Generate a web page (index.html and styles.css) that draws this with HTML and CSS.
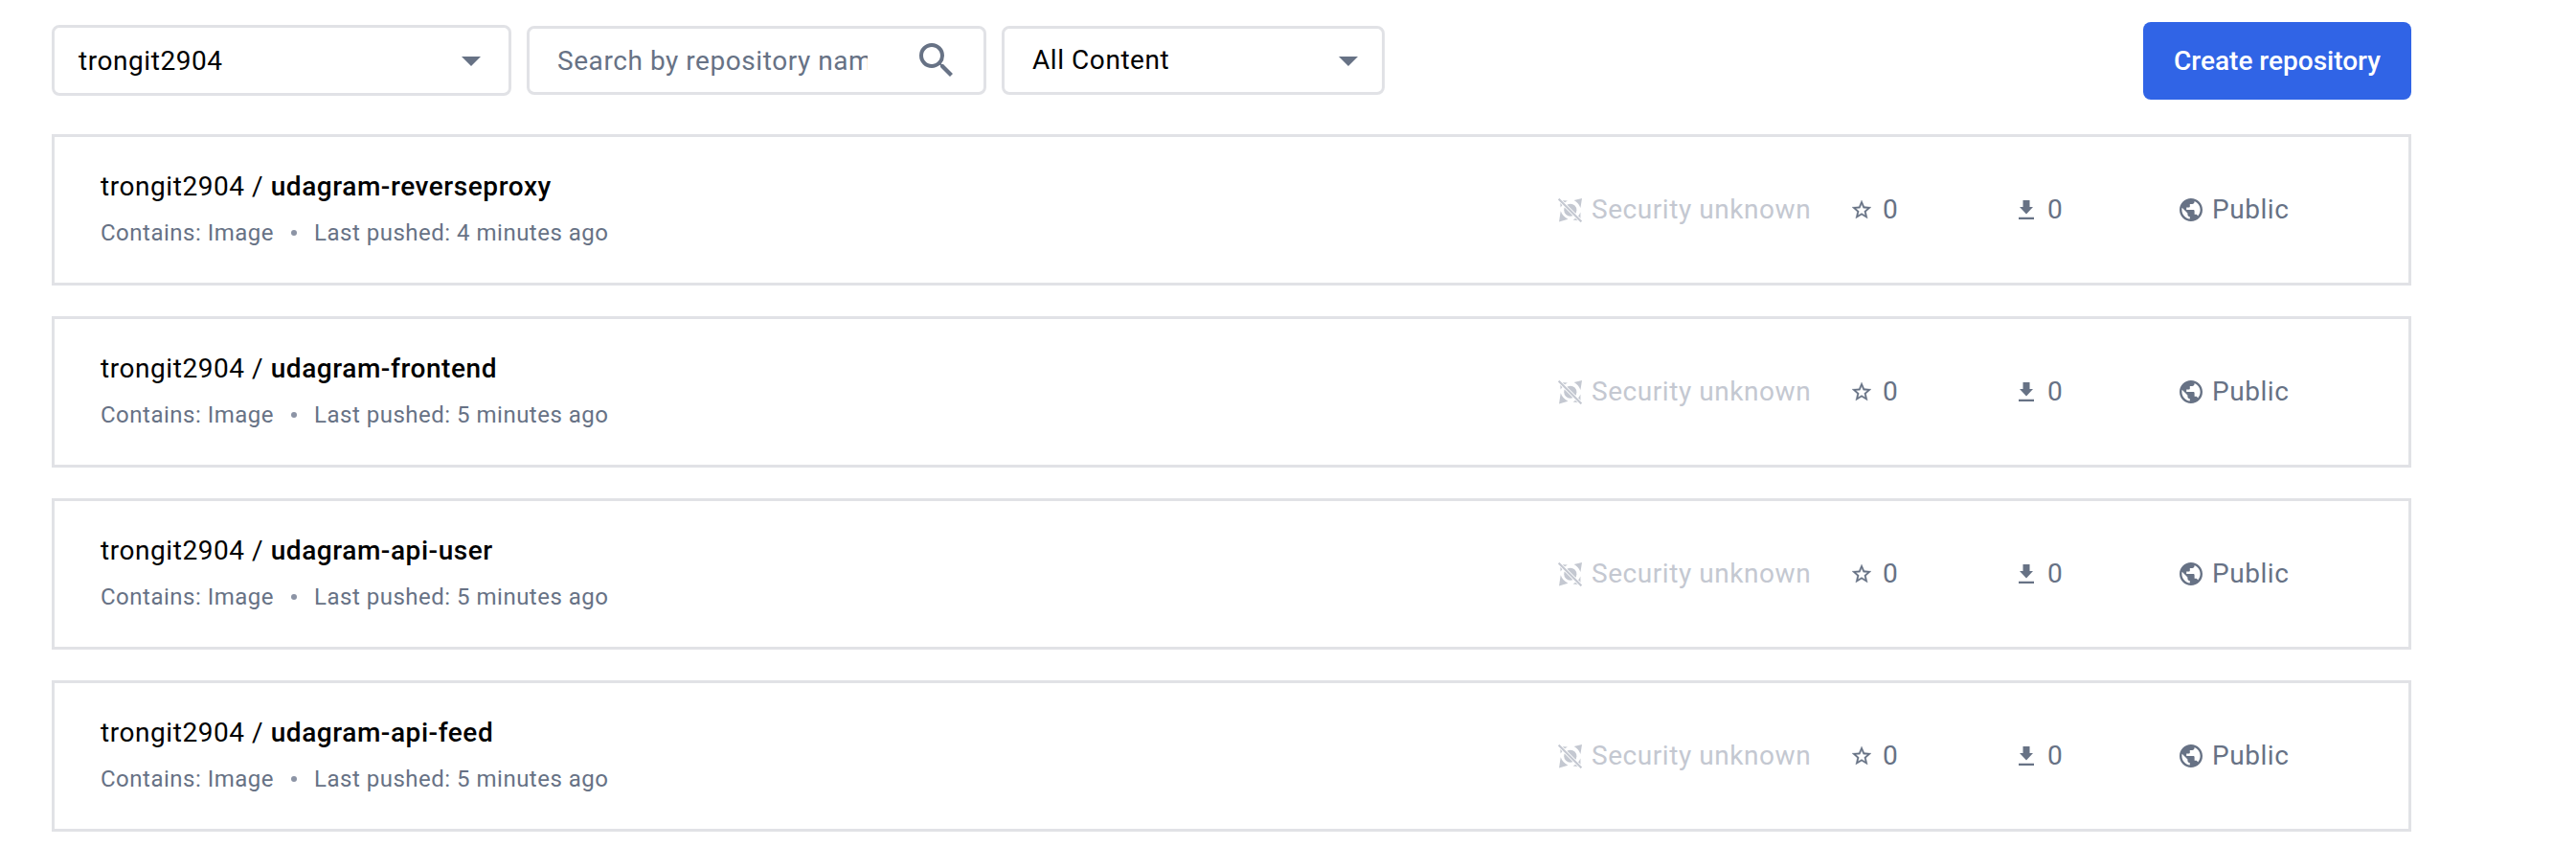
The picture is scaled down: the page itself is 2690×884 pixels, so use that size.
FILE: index.html
```html
<!DOCTYPE html>
<html lang="en">
<head>
<meta charset="utf-8">
<title>Repositories</title>
<link rel="stylesheet" href="styles.css">
</head>
<body>
<svg class="sprite" aria-hidden="true">
  <symbol id="caret" viewBox="0 0 20 10"><path d="M0 0h20L10 10z"/></symbol>
  <symbol id="search" viewBox="0 0 24 24"><path d="M15.5 14h-.79l-.28-.27A6.471 6.471 0 0 0 16 9.500 6.500 6.500 0 1 0 9.500 16c1.610 0 3.090-.59 4.230-1.570l.27.28v.79l5 4.990L20.490 19l-4.990-5zm-6 0C7.010 14 5 11.990 5 9.500S7.010 5 9.500 5 14 7.010 14 9.500 11.990 14 9.500 14z"/></symbol>
  <symbol id="security" viewBox="0 0 24 24">
    <circle cx="12.300" cy="11.700" r="6.300"/>
    <path d="M24 0 16 2Q20.500 4.500 22.500 9.500zM1 23.500 2.600 12.800Q4.500 18 10 20.800zM2 2l7.500.5Q5 4.500 2.500 9zM22.500 22.500 22.500 14Q20.500 19 15 21.500z"/>
    <path class="slash-gap" d="M0 0 24 24"/>
    <path class="slash" d="M.6.6 23.400 23.400"/>
  </symbol>
  <symbol id="star" viewBox="0 0 24 24"><path d="M22 9.240l-7.190-.62L12 2 9.190 8.630 2 9.240l5.460 4.730L5.820 21 12 17.270 18.180 21l-1.630-7.030L22 9.240zM12 15.400l-3.760 2.270 1-4.280-3.320-2.880 4.380-.38L12 6.100l1.710 4.040 4.380.38-3.320 2.880 1 4.280L12 15.400z"/></symbol>
  <symbol id="download" viewBox="0 0 16 20"><path d="M4.500 0h7v7H15l-7 7.500L1 7h3.500zM0 17.700h16V20H0z"/></symbol>
  <symbol id="globe" viewBox="2 2 20 20"><path d="M12 2C6.480 2 2 6.480 2 12s4.480 10 10 10 10-4.480 10-10S17.520 2 12 2zm-1 17.930c-3.950-.49-7-3.850-7-7.930 0-.62.08-1.210.21-1.790L9 15v1c0 1.100.9 2 2 2v1.930zm6.900-2.540c-.26-.81-1-1.390-1.900-1.390h-1v-3c0-.55-.45-1-1-1H8v-2h2c.55 0 1-.45 1-1V7h2c1.100 0 2-.9 2-2v-.41c2.930 1.190 5 4.060 5 7.410 0 2.080-.8 3.970-2.100 5.390z"/></symbol>
</svg>
<main class="page">
  <header class="toolbar">
    <div class="field field-account"><span class="account">trongit2904</span><svg class="caret"><use href="#caret"/></svg></div>
    <div class="field field-search"><span class="placeholder">Search by repository name</span><svg class="search-icon"><use href="#search"/></svg></div>
    <div class="field field-content"><span>All Content</span><svg class="caret"><use href="#caret"/></svg></div>
    <button class="create">Create repository</button>
  </header>
  <section class="list">
    <article class="card">
      <div class="info"><h2 class="name">trongit2904 / <b>udagram-reverseproxy</b></h2><p class="meta"><span>Contains: Image</span><i class="dot"></i><span>Last pushed: 4 minutes ago</span></p></div>
      <div class="stat security"><svg class="i-security"><use href="#security"/></svg>Security unknown</div>
      <div class="stat stars"><svg class="i-star"><use href="#star"/></svg>0</div>
      <div class="stat pulls"><svg class="i-download"><use href="#download"/></svg>0</div>
      <div class="stat visibility"><svg class="i-globe"><use href="#globe"/></svg>Public</div>
    </article>
    <article class="card">
      <div class="info"><h2 class="name">trongit2904 / <b>udagram-frontend</b></h2><p class="meta"><span>Contains: Image</span><i class="dot"></i><span>Last pushed: 5 minutes ago</span></p></div>
      <div class="stat security"><svg class="i-security"><use href="#security"/></svg>Security unknown</div>
      <div class="stat stars"><svg class="i-star"><use href="#star"/></svg>0</div>
      <div class="stat pulls"><svg class="i-download"><use href="#download"/></svg>0</div>
      <div class="stat visibility"><svg class="i-globe"><use href="#globe"/></svg>Public</div>
    </article>
    <article class="card">
      <div class="info"><h2 class="name">trongit2904 / <b>udagram-api-user</b></h2><p class="meta"><span>Contains: Image</span><i class="dot"></i><span>Last pushed: 5 minutes ago</span></p></div>
      <div class="stat security"><svg class="i-security"><use href="#security"/></svg>Security unknown</div>
      <div class="stat stars"><svg class="i-star"><use href="#star"/></svg>0</div>
      <div class="stat pulls"><svg class="i-download"><use href="#download"/></svg>0</div>
      <div class="stat visibility"><svg class="i-globe"><use href="#globe"/></svg>Public</div>
    </article>
    <article class="card">
      <div class="info"><h2 class="name">trongit2904 / <b>udagram-api-feed</b></h2><p class="meta"><span>Contains: Image</span><i class="dot"></i><span>Last pushed: 5 minutes ago</span></p></div>
      <div class="stat security"><svg class="i-security"><use href="#security"/></svg>Security unknown</div>
      <div class="stat stars"><svg class="i-star"><use href="#star"/></svg>0</div>
      <div class="stat pulls"><svg class="i-download"><use href="#download"/></svg>0</div>
      <div class="stat visibility"><svg class="i-globe"><use href="#globe"/></svg>Public</div>
    </article>
  </section>
</main>
</body>
</html>
```

FILE: styles.css
```css
* { box-sizing: border-box; }

body {
  margin: 0;
  background: #fff;
  color: #000;
  font: 400 28px/40px Roboto, sans-serif;
  letter-spacing: 0.56px;
}

svg { display: block; flex: none; fill: currentColor; }
.sprite { position: absolute; width: 0; height: 0; }
.slash-gap { stroke: #fff; stroke-width: 3.6; }
.slash { stroke: currentColor; stroke-width: 2; }

.page { width: 2518px; padding: 23px 0 0 54px; }

.toolbar { display: flex; align-items: flex-start; gap: 16px; height: 81px; }

.field {
  display: flex;
  align-items: center;
  justify-content: space-between;
  height: 72px;
  margin-top: 4px;
  border: 3px solid #e1e2e6;
  border-radius: 8px;
  white-space: nowrap;
}
.field-account { width: 480px; height: 74px; margin-top: 3px; padding: 0 29px 0 25px; }
.field-search { width: 480px; padding: 0 25px 0 29px; color: #677285; }
.field-content { width: 400px; padding: 0 25px 0 29px; }
.account { padding-top: 2px; }
.placeholder { width: 324px; padding-top: 2px; overflow: hidden; }
.caret { width: 20px; height: 10px; margin-top: 2px; color: #677285; }
.search-icon { width: 48px; height: 48px; }

.create {
  width: 280px;
  height: 81px;
  margin-left: auto;
  padding: 0;
  border: 0;
  border-radius: 8px;
  background: #3064e6;
  color: #fff;
  font: inherit;
  font-weight: 500;
  letter-spacing: 0;
}

.list { display: flex; flex-direction: column; gap: 32px; margin-top: 36px; }

.card {
  display: flex;
  align-items: center;
  height: 158px;
  padding: 0 0 0 48px;
  border: 3px solid #e1e2e6;
}
.info { width: 1522px; padding-bottom: 2px; }
.name { margin: 0 0 10px; font: inherit; }
.name b { font-weight: 500; }
.meta {
  display: flex;
  align-items: center;
  margin: 0;
  color: #677285;
  font-size: 24px;
  line-height: 36px;
  letter-spacing: 0.5px;
}
.dot { width: 6px; height: 6px; margin: 0 18px; border-radius: 50%; background: #8c94a5; }

.stat { display: flex; align-items: center; color: #677285; white-space: nowrap; }
.security { gap: 10px; width: 305px; color: #c4c8d1; }
.stars { gap: 10px; width: 176px; }
.pulls { gap: 14px; width: 168px; }
.visibility { gap: 10px; }
.i-security { width: 25px; height: 25px; }
.i-star { width: 24px; height: 24px; stroke: currentColor; stroke-width: 0.3; }
.i-download { width: 16px; height: 20px; }
.i-globe { width: 24px; height: 24px; }
```
